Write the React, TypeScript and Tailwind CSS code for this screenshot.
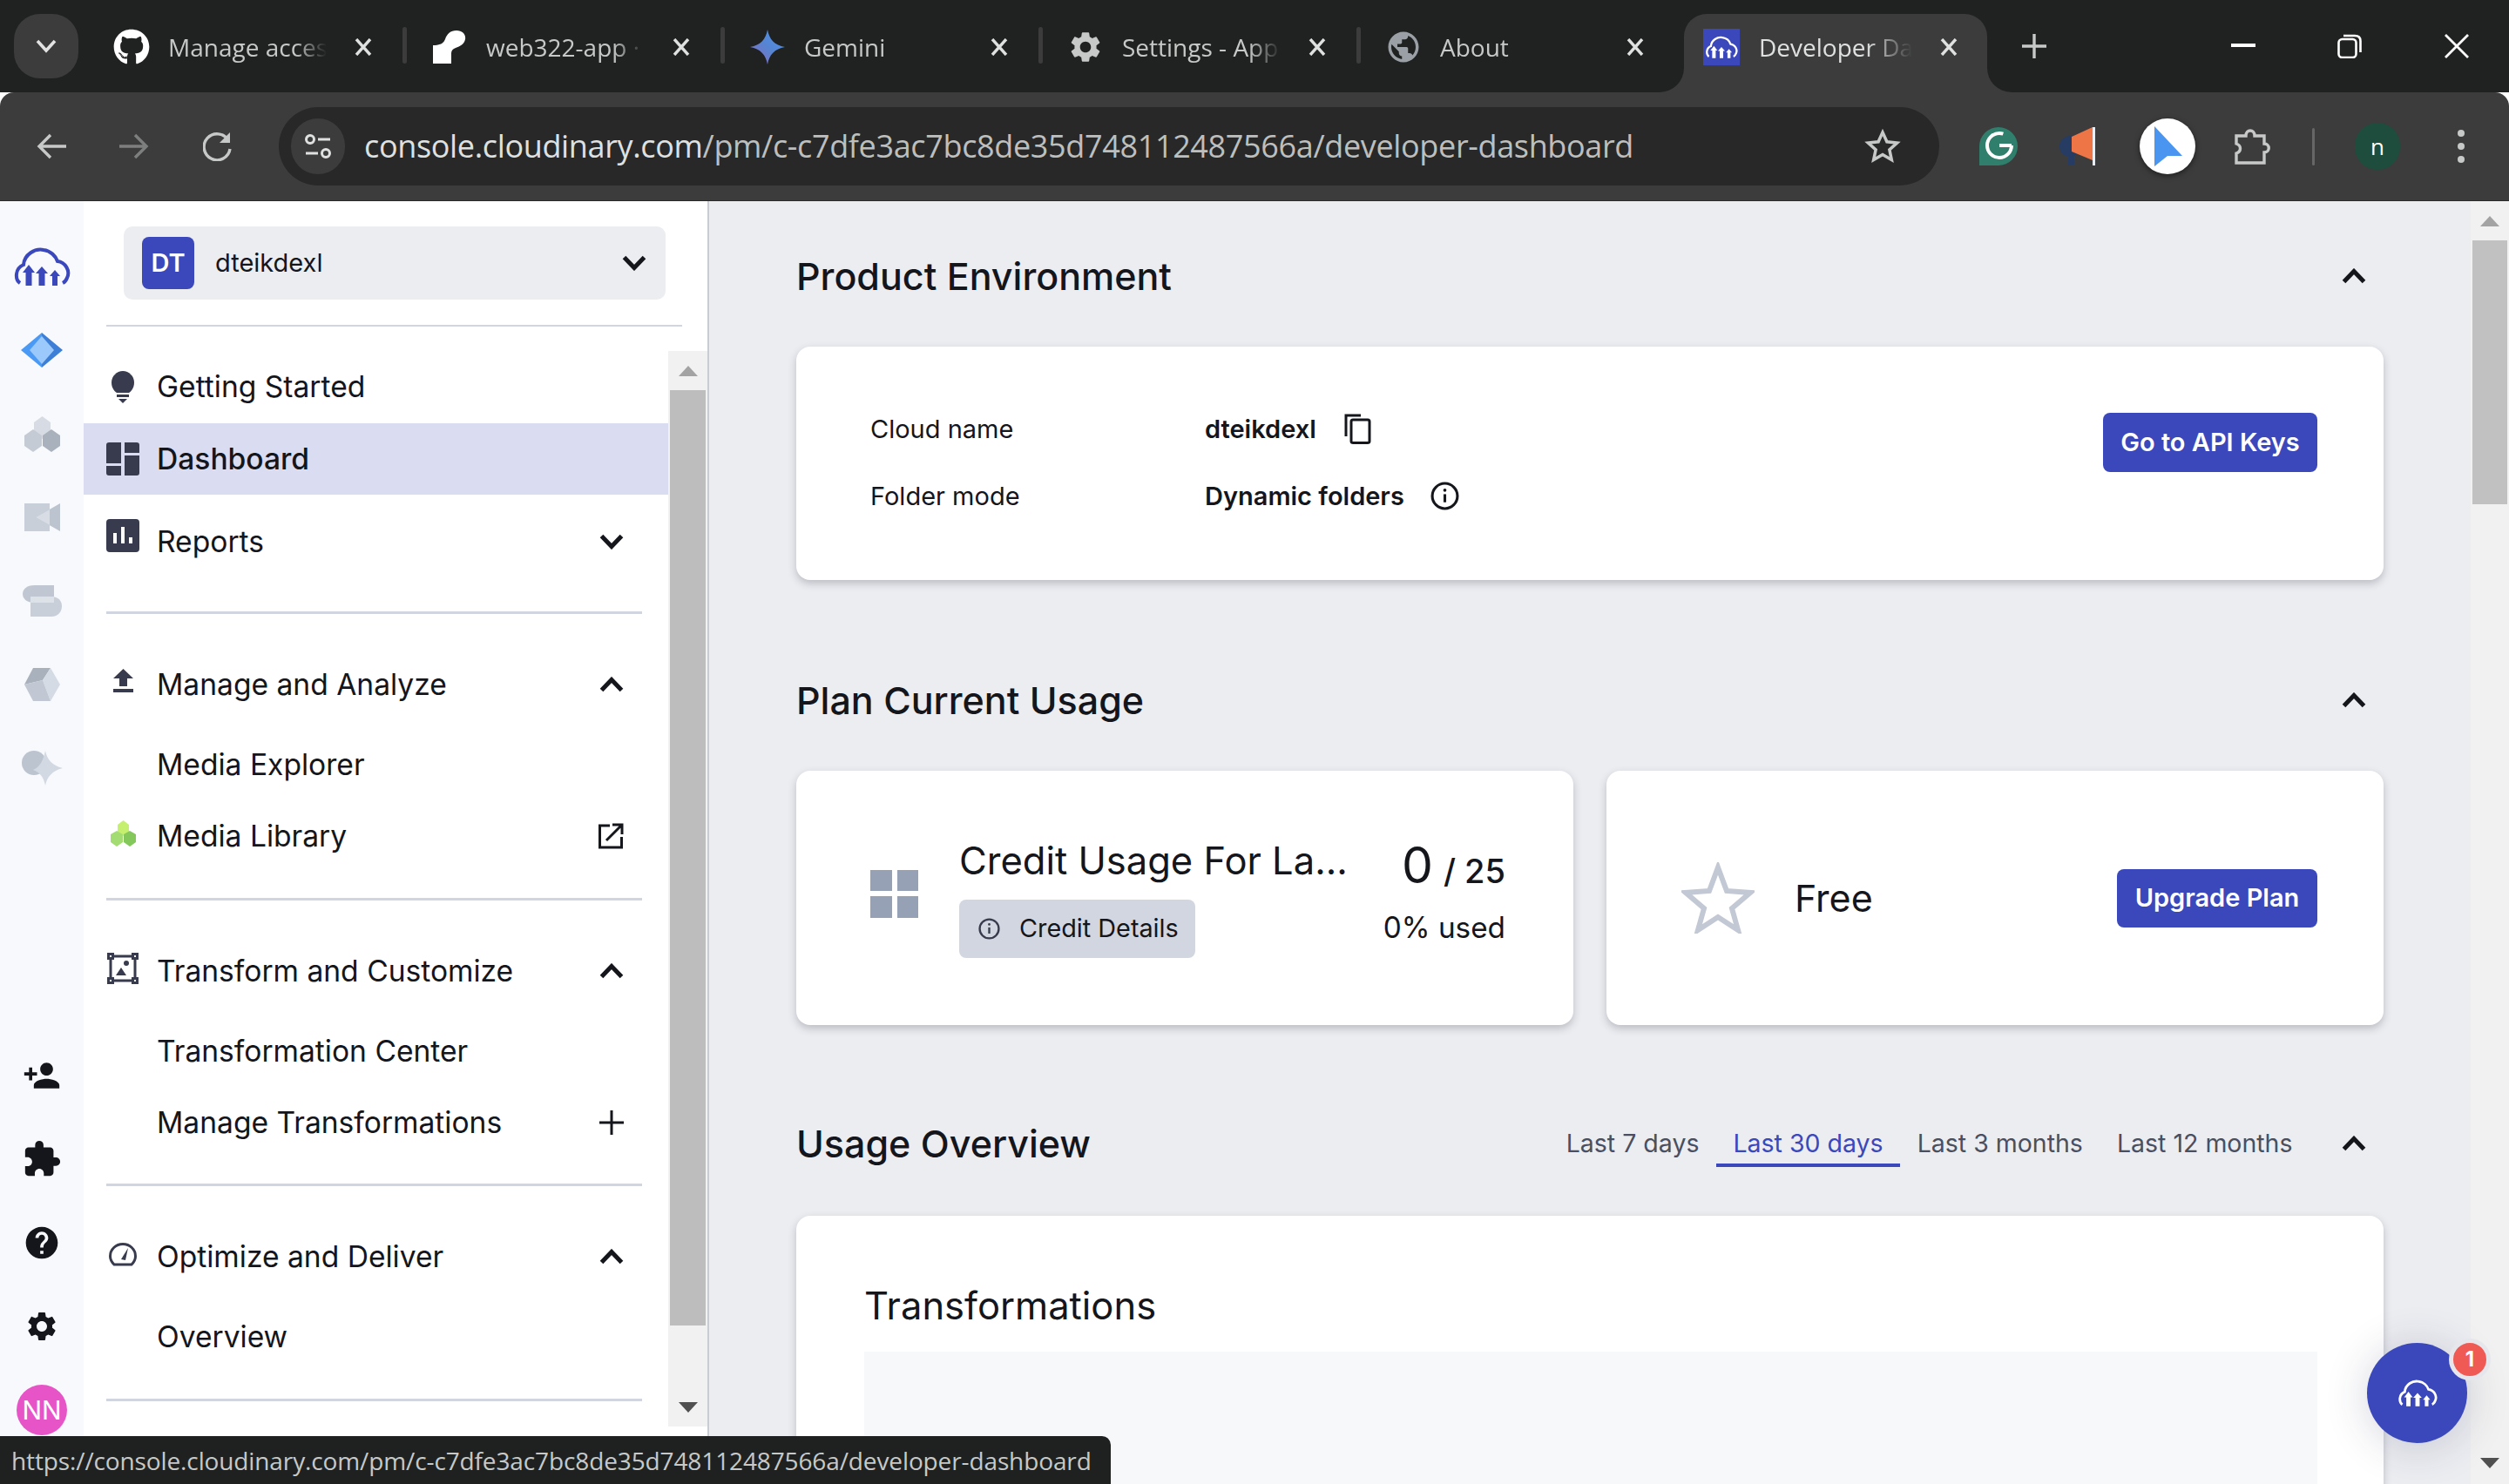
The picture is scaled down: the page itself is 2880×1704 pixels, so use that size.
import type { ReactNode } from 'react';
import { FaGithub } from 'react-icons/fa';
import { MdPublic, MdSettings, MdExtension, MdHelp, MdPersonAdd } from 'react-icons/md';

const INTER = 'font-["Inter",sans-serif]';

function CloudLogo({ className }: { className: string }) {
  return (
    <svg viewBox="0 0 66 44" className={className} fill="currentColor">
      <path d="M8 41C2 37 2 24 12 20 13 8 25 1 35 3c8 1 14 7 16 13 9 1 15 11 11 19-1 3-3 5-5 6" fill="none" stroke="currentColor" strokeWidth="4" />
      <polygon points="18,20 25,29 21.5,29 21.5,44 14.5,44 14.5,29 11,29" />
      <polygon points="33,22 40,30 36.5,30 36.5,44 29.5,44 29.5,30 26,30" />
      <polygon points="48,26 54,33 51,33 51,44 45,44 45,33 42,33" />
    </svg>
  );
}

function Chevron({ up, className = 'w-[28px] h-[18px]' }: { up?: boolean; className?: string }) {
  return (
    <svg viewBox="0 0 28 18" className={className} fill="none" stroke="#14161c" strokeWidth="5">
      <path d={up ? 'M2.5 15.5 14 3.5l11.5 12' : 'M2.5 2.5 14 14.5 25.5 2.5'} />
    </svg>
  );
}

function TabClose() {
  return (
    <svg viewBox="0 0 22 20" className="w-[22px] h-[20px] shrink-0" stroke="#dfe1e0" strokeWidth="3.4" fill="none">
      <path d="M3 1l16 18M19 1 3 19" />
    </svg>
  );
}

function Tab({ icon, title, last }: { icon: ReactNode; title: string; last?: boolean }) {
  return (
    <div className="relative flex items-center w-[365px] h-[90px] pb-[14px] pl-[28px] shrink-0">
      <div className="w-[42px] flex justify-center shrink-0">{icon}</div>
      <div className="ml-[21px] w-[182px] overflow-hidden whitespace-nowrap text-[28px] text-[#c7c9c8] [mask-image:linear-gradient(to_right,black_80%,transparent)]">{title}</div>
      <div className="ml-[31px]">
        <TabClose />
      </div>
      {!last && <div className="absolute right-[0px] top-[15px] w-[5px] h-[42px] rounded-full bg-[#3c3c3c]" />}
    </div>
  );
}

function RailRow({ children }: { children: ReactNode }) {
  return <div className="h-[96px] flex items-center justify-center">{children}</div>;
}

function NavRow({ icon, label, right, active }: { icon?: ReactNode; label: string; right?: ReactNode; active?: boolean }) {
  return (
    <div className={`flex items-center h-[82px] pl-[26px] pr-[51px] ${active ? 'bg-[#dadcf1]' : ''}`}>
      <div className="w-[38px] mr-[20px] flex justify-center shrink-0">{icon}</div>
      <span className={`text-[33.600px] pt-[1px] text-[#14161c] ${active ? 'font-medium' : ''}`}>{label}</span>
      {right && <div className="ml-auto flex items-center">{right}</div>}
    </div>
  );
}

function Divider({ className = '' }: { className?: string }) {
  return <div className={`h-[3px] ml-[26px] mr-[30px] bg-[#d1d5e0] ${className}`} />;
}

function SectionHead({ title, right }: { title: string; right?: ReactNode }) {
  return (
    <div className="flex items-center h-[60px]">
      <h2 className="text-[43px] font-medium text-[#14161c]">{title}</h2>
      <div className="ml-auto flex items-center">
        {right}
        <div className="ml-[37px] mr-[20px]">
          <Chevron up />
        </div>
      </div>
    </div>
  );
}

function PrimaryButton({ label, className }: { label: string; className: string }) {
  return (
    <button className={`bg-[#3a48bc] rounded-[8px] text-white font-semibold text-[29px] flex items-center justify-center ${className}`}>{label}</button>
  );
}

function InfoIcon({ className, color }: { className: string; color: string }) {
  return (
    <svg viewBox="0 0 32 32" className={className} fill="none" stroke={color}>
      <circle cx="16" cy="16" r="14" strokeWidth="3" />
      <path d="M16 14v9" strokeWidth="3" />
      <circle cx="16" cy="9.5" r="1.8" fill={color} stroke="none" />
    </svg>
  );
}

function ScrollArrow({ up, color }: { up?: boolean; color: string }) {
  return (
    <svg viewBox="0 0 22 12" className="w-[22px] h-[12px]" fill={color}>
      <polygon points={up ? '11,0 22,12 0,12' : '0,0 22,0 11,12'} />
    </svg>
  );
}

export default function App() {
  return (
    <div className={`relative w-[2880px] h-[1704px] overflow-hidden flex flex-col bg-white ${INTER}`}>
      {/* tab strip */}
      <div className="h-[106px] bg-[#202221] flex items-end font-['Open_Sans',sans-serif] shrink-0">
        <div className="self-start mt-[16px] ml-[16px] w-[74px] h-[74px] rounded-[30px] bg-[#3c3c3c] flex items-center justify-center shrink-0">
          <svg viewBox="0 0 24 16" className="w-[24px] h-[16px]" fill="none" stroke="#e3e3e3" strokeWidth="3.6">
            <path d="M2 2l10 11L22 2" />
          </svg>
        </div>
        <div className="flex self-start mt-[16px] ml-[12px]">
          <Tab icon={<FaGithub className="w-[42px] h-[42px] text-white" />} title="Manage access" />
          <Tab
            icon={
              <svg viewBox="0 0 38 38" className="w-[38px] h-[38px]" fill="white">
                <path d="M0 17c8 0 12-2 14-7 2-6 6-10 13-10 7 0 11 5 10 10-1 6-6 8-11 10-3 1-5 3-5 6v12H0z" />
              </svg>
            }
            title="web322-app ·"
          />
          <Tab
            icon={
              <svg viewBox="0 0 40 40" className="w-[40px] h-[40px]">
                <defs>
                  <linearGradient id="gem" x1="0" y1="1" x2="1" y2="0">
                    <stop offset="0" stopColor="#9168c0" />
                    <stop offset="0.5" stopColor="#5684d1" />
                    <stop offset="1" stopColor="#4b96f0" />
                  </linearGradient>
                </defs>
                <path d="M20 0c2 11 8 18 20 20-12 2-18 9-20 20-2-11-8-18-20-20C12 18 18 11 20 0z" fill="url(#gem)" />
              </svg>
            }
            title="Gemini"
          />
          <Tab icon={<MdSettings className="w-[44px] h-[44px] text-[#c7c9c8]" />} title="Settings - App" />
          <Tab icon={<MdPublic className="w-[46px] h-[46px] text-[#9aa0a6]" />} title="About" last />
          {/* active tab */}
          <div className="relative flex items-center w-[348px] h-[90px] pb-[14px] pl-[22px] ml-[6px] bg-[#3c3c3c] rounded-t-[26px] shrink-0">
            <div className="absolute -left-[28px] bottom-0 w-[28px] h-[28px] bg-[#3c3c3c]">
              <div className="w-full h-full bg-[#202221] rounded-br-[28px]" />
            </div>
            <div className="absolute -right-[28px] bottom-0 w-[28px] h-[28px] bg-[#3c3c3c]">
              <div className="w-full h-full bg-[#202221] rounded-bl-[28px]" />
            </div>
            <div className="w-[42px] h-[42px] bg-[#3a48bc] flex items-center justify-center text-white shrink-0">
              <CloudLogo className="w-[38px] h-[26px]" />
            </div>
            <div className="ml-[22px] w-[176px] overflow-hidden whitespace-nowrap text-[28px] text-[#dfe1e0] [mask-image:linear-gradient(to_right,black_70%,transparent)]">Developer Dashboard</div>
            <div className="ml-[31px]">
              <TabClose />
            </div>
          </div>
        </div>
        <div className="self-start mt-[39px] ml-[40px] text-[#c7c9c8]">
          <svg viewBox="0 0 28 28" className="w-[28px] h-[28px]" stroke="currentColor" strokeWidth="3.4">
            <path d="M14 0v28M0 14h28" />
          </svg>
        </div>
        <div className="self-start mt-[39px] ml-[212px] flex items-center">
          <div className="w-[28px] h-[4px] bg-white mt-[-3px]" />
          <svg viewBox="0 0 28 28" className="ml-[94px] w-[28px] h-[28px]" fill="none" stroke="white" strokeWidth="2.6">
            <rect x="1.5" y="6" width="20" height="21" rx="4" />
            <path d="M7 2h13c4 0 6.500 2 6.500 6v13" />
          </svg>
          <svg viewBox="0 0 28 28" className="ml-[95px] w-[28px] h-[28px]" fill="none" stroke="white" strokeWidth="2.8">
            <path d="M1 1l26 26M27 1 1 27" />
          </svg>
        </div>
      </div>

      {/* toolbar */}
      <div className="h-[125px] bg-[#3c3c3c] rounded-t-[16px] flex items-center shrink-0 border-b border-[#2c2c2c] font-['Open_Sans',sans-serif]">
        <div className="pl-[42px] flex items-center">
          <svg viewBox="0 0 34 30" className="w-[34px] h-[30px]" fill="none" stroke="#c7c9c8" strokeWidth="3.4">
            <path d="M16 2 3 15l13 13M3 15h31" />
          </svg>
          <svg viewBox="0 0 34 30" className="ml-[61px] w-[34px] h-[30px]" fill="none" stroke="#7d7f7e" strokeWidth="3.4">
            <path d="M18 2l13 13-13 13M31 15H0" />
          </svg>
          <svg viewBox="0 0 34 34" className="ml-[62px] w-[34px] h-[34px]" fill="none" stroke="#c7c9c8" strokeWidth="3.4">
            <path d="M29 10A15 15 0 1 0 31 20" />
            <polygon points="31,1 31,13 19,13" fill="#c7c9c8" stroke="none" />
          </svg>
        </div>
        <div className="ml-[53px] w-[1906px] h-[90px] rounded-full bg-[#282828] flex items-center pl-[14px] pr-[44px]">
          <div className="w-[62px] h-[64px] rounded-full bg-[#3c3c3c] flex items-center justify-center shrink-0">
            <svg viewBox="0 0 32 32" className="w-[32px] h-[32px]" fill="none" stroke="#dfe1e0" strokeWidth="3">
              <circle cx="7" cy="8" r="4.500" />
              <path d="M16 8h14M2 24h14" />
              <circle cx="25" cy="24" r="4.500" />
            </svg>
          </div>
          <div className="ml-[22px] text-[36px] tracking-[-0.35px] text-[#dfe1e0] whitespace-nowrap">
            console.cloudinary.com<span className="text-[#bdbfbe]">/pm/c-c7dfe3ac7bc8de35d748112487566a/developer-dashboard</span>
          </div>
          <svg viewBox="0 0 24 24" className="ml-auto w-[42px] h-[42px] shrink-0" fill="none" stroke="#c7c9c8" strokeWidth="2">
            <path d="M12 2.800l2.800 6.200 6.700.7-5 4.500 1.400 6.600-5.900-3.400-5.900 3.400 1.400-6.600-5-4.500 6.700-.7z" />
          </svg>
        </div>
        <div className="ml-[46px] flex items-center">
          <svg viewBox="0 0 44 44" className="w-[44px] h-[44px]">
            <path d="M22 0a22 22 0 0 1 0 44H0V22A22 22 0 0 1 22 0z" fill="#2f7f6c" />
            <circle cx="23" cy="21" r="14" fill="none" stroke="white" strokeWidth="4" strokeDasharray="70 18" />
            <path d="M23 21h14" stroke="white" strokeWidth="4" />
          </svg>
          <svg viewBox="0 0 42 44" className="ml-[48px] w-[42px] h-[44px]">
            <circle cx="12" cy="22" r="12" fill="#263c63" />
            <rect x="10" y="30" width="7" height="14" fill="#263c63" />
            <polygon points="14,11 38,0 38,38 14,28" fill="#ee7546" />
            <rect x="38" y="0" width="3" height="44" fill="#e8eef4" />
          </svg>
          <div className="ml-[50px] w-[64px] h-[64px] rounded-full bg-white shadow-[0_2px_6px_rgba(0,0,0,0.5)] flex items-center justify-center">
            <svg viewBox="0 0 34 46" className="w-[34px] h-[46px]">
              <path d="M2 0l32 34-17 0-15 12z" fill="#4a95f0" />
            </svg>
          </div>
          <svg viewBox="0 0 42 42" className="ml-[44px] w-[42px] h-[42px]" fill="none" stroke="#c7c9c8" strokeWidth="3.400">
            <path d="M3 9h11c0-8 10-8 10 0h11v9c7 0 7 10 0 10v12H3V29c6-2 6-9 0-11z" />
          </svg>
          <div className="ml-[48px] w-[3px] h-[43px] rounded-full bg-[#666666]" />
          <div className="ml-[46px] w-[52px] h-[54px] rounded-full bg-[#1e4d3e] flex items-center justify-center text-white text-[26px]">n</div>
          <div className="ml-[66px] flex flex-col gap-[7px]">
            <div className="w-[8px] h-[8px] rounded-full bg-[#c7c9c8]" />
            <div className="w-[8px] h-[8px] rounded-full bg-[#c7c9c8]" />
            <div className="w-[8px] h-[8px] rounded-full bg-[#c7c9c8]" />
          </div>
        </div>
      </div>

      {/* page */}
      <div className="flex flex-1 min-h-0">
        {/* rail */}
        <div className="w-[96px] bg-[#f8f9fc] flex flex-col justify-between pt-[27px] pb-[37px] shrink-0">
          <div>
            <RailRow>
              <CloudLogo className="w-[66px] h-[44px] text-[#3a48bc]" />
            </RailRow>
            <RailRow>
              <svg viewBox="0 0 48 40" className="w-[48px] h-[40px]">
                <polygon points="24,0 48,20 24,40" fill="#3d7fd6" transform="translate(0 0)" />
                <polygon points="24,0 0,20 24,40" fill="#4a9af5" />
                <polygon points="24,4 38,20 24,36 10,20" fill="#9cc9fb" />
              </svg>
            </RailRow>
            <RailRow>
              <svg viewBox="0 0 41 41" className="w-[41px] h-[41px]">
                <polygon points="20.5,0 30,7 30,19 20.5,26 11,19 11,7" fill="#d7dce4" />
                <polygon points="10,15 20,22 20,34 10,41 0,34 0,22" fill="#c5cbd5" />
                <polygon points="31,15 41,22 41,34 31,41 21,34 21,22" fill="#a9b1bc" />
              </svg>
            </RailRow>
            <RailRow>
              <svg viewBox="0 0 41 32" className="w-[41px] h-[32px]">
                <rect width="29" height="32" fill="#c9cfd9" />
                <polygon points="13,16 41,0 41,32" fill="#bcc4d0" />
                <polygon points="13,16 29,7 29,25" fill="#d8dde5" />
              </svg>
            </RailRow>
            <RailRow>
              <svg viewBox="0 0 45 36" className="w-[45px] h-[36px]">
                <path d="M14 0h22v20H14C4 20 0 15 0 10S4 0 14 0z" fill="#c0c7d2" />
                <path d="M9 13h24c8 0 12 5 12 11s-4 12-12 12H9z" fill="#c9cfd9" />
                <rect x="9" y="13" width="27" height="7" fill="#dde1e8" />
              </svg>
            </RailRow>
            <RailRow>
              <svg viewBox="0 0 41 38" className="w-[41px] h-[38px]">
                <polygon points="10,0 30,0 21,14 0,19" fill="#a9b1bc" />
                <polygon points="30,0 41,19 30,38 21,14" fill="#d5dbe4" />
                <polygon points="0,19 21,14 30,38 10,38" fill="#c1c8d3" />
              </svg>
            </RailRow>
            <RailRow>
              <svg viewBox="0 0 47 40" className="w-[47px] h-[40px]">
                <circle cx="14" cy="14" r="14" fill="#bcc4d0" />
                <path d="M27 0c2 10 8 17 20 20-12 3-18 10-20 20-2-10-6-15-14-18 8-3 12-12 14-22z" fill="#d3d9e2" />
              </svg>
            </RailRow>
          </div>
          <div className="text-[#14161c]">
            <RailRow>
              <MdPersonAdd className="w-[44px] h-[44px]" />
            </RailRow>
            <RailRow>
              <MdExtension className="w-[46px] h-[46px]" />
            </RailRow>
            <RailRow>
              <MdHelp className="w-[44px] h-[44px]" />
            </RailRow>
            <RailRow>
              <MdSettings className="w-[40px] h-[40px]" />
            </RailRow>
            <RailRow>
              <div className="w-[58px] h-[58px] rounded-full bg-[#e754c8] text-white text-[30px] flex items-center justify-center">NN</div>
            </RailRow>
          </div>
        </div>

        {/* sidebar */}
        <div className="w-[718px] shrink-0 bg-white border-r-2 border-[#c9ccd3] flex flex-col">
          <div className="mt-[29px] ml-[46px] w-[622px] h-[84px] rounded-[10px] bg-[#ecedf1] flex items-center pl-[21px] pr-[22px] shrink-0">
            <div className="w-[60px] h-[60px] rounded-[8px] bg-[#3a48bc] text-white text-[29px] font-semibold flex items-center justify-center">DT</div>
            <span className="ml-[24px] text-[29px] text-[#14161c]">dteikdexl</span>
            <div className="ml-auto">
              <Chevron />
            </div>
          </div>
          <div className="mt-[29px] ml-[26px] w-[661px] h-[2px] bg-[#d1d5e0] shrink-0" />
          <div className="mt-[28px] flex flex-1 min-h-0">
            <div className="w-[671px] shrink-0 overflow-hidden">
              <div className="pb-[1px]">
                <NavRow
                  label="Getting Started"
                  icon={
                    <svg viewBox="0 0 26 37" className="w-[26px] h-[37px]" fill="#373b4d">
                      <path d="M13 0c7 0 13 6 13 13 0 6-3 10-6 12H6c-3-2-6-6-6-12C0 6 6 0 13 0z" />
                      <rect x="6" y="27" width="14" height="3" />
                      <polygon points="8,32 18,32 13,37" />
                    </svg>
                  }
                />
              </div>
              <NavRow
                active
                label="Dashboard"
                icon={
                  <svg viewBox="0 0 38 38" className="w-[38px] h-[38px]" fill="#373b4d">
                    <path d="M3 0h14v24H0V3a3 3 0 0 1 3-3zM21 0h14a3 3 0 0 1 3 3v9H21zM21 15h17v20a3 3 0 0 1-3 3H21zM0 27h17v11H3a3 3 0 0 1-3-3z" />
                  </svg>
                }
              />
              <div className="mt-[13px]">
                <NavRow
                  label="Reports"
                  right={<Chevron />}
                  icon={
                    <svg viewBox="0 0 38 38" className="w-[38px] h-[38px] mt-[-14px]">
                      <rect width="38" height="38" rx="4" fill="#373b4d" />
                      <path d="M10 28V16M19 28V9M28 28v-7" stroke="white" strokeWidth="4" />
                    </svg>
                  }
                />
              </div>
              <Divider className="mt-[39px]" />
              <div className="pt-[40px]">
                <NavRow
                  label="Manage and Analyze"
                  right={<Chevron up />}
                  icon={
                    <svg viewBox="0 0 23 27" className="w-[23px] h-[27px] mt-[-10px]" fill="#373b4d">
                      <polygon points="11.5,0 23,11 16,11 16,20 7,20 7,11 0,11" />
                      <rect y="23" width="23" height="4" />
                    </svg>
                  }
                />
                <div className="h-[10px]" />
                <NavRow label="Media Explorer" />
                <NavRow
                  label="Media Library"
                  icon={
                    <svg viewBox="0 0 29 30" className="w-[29px] h-[30px] mt-[-6px]">
                      <polygon points="14.5,0 21,5 21,13 14.5,18 8,13 8,5" fill="#c5f06f" />
                      <polygon points="7,12 14,16 14,25 7,30 0,25 0,16" fill="#a3dc72" />
                      <polygon points="22,12 29,16 29,25 22,30 15,25 15,16" fill="#84c85c" />
                    </svg>
                  }
                  right={
                    <svg viewBox="0 0 30 30" className="w-[30px] h-[30px] ml-[6px]" fill="none" stroke="#14161c" strokeWidth="3">
                      <path d="M14 3H2.500v25h25V16M10 20 27 3M17 2h11v11" />
                    </svg>
                  }
                />
              </div>
              <Divider className="mt-[30px]" />
              <div className="pt-[40px]">
                <NavRow
                  label="Transform and Customize"
                  right={<Chevron up />}
                  icon={
                    <svg viewBox="0 0 36 36" className="w-[36px] h-[36px] mt-[-6px]" fill="none" stroke="#373b4d" strokeWidth="3">
                      <path d="M6 4h24M6 32h24M4 6v24M32 6v24" />
                      <rect x="1.500" y="1.500" width="5" height="5" />
                      <rect x="29.500" y="1.500" width="5" height="5" />
                      <rect x="1.500" y="29.500" width="5" height="5" />
                      <rect x="29.500" y="29.500" width="5" height="5" />
                      <circle cx="22" cy="12" r="3" fill="#373b4d" stroke="none" />
                      <polygon points="10,26 16,17 22,26" fill="#373b4d" stroke="none" />
                    </svg>
                  }
                />
                <div className="h-[10px]" />
                <NavRow label="Transformation Center" />
                <NavRow
                  label="Manage Transformations"
                  right={
                    <svg viewBox="0 0 28 28" className="w-[28px] h-[28px]" stroke="#14161c" strokeWidth="3">
                      <path d="M14 0v28M0 14h28" />
                    </svg>
                  }
                />
              </div>
              <Divider className="mt-[29px]" />
              <div className="pt-[40px]">
                <NavRow
                  label="Optimize and Deliver"
                  right={<Chevron up />}
                  icon={
                    <svg viewBox="0 0 32 27" className="w-[32px] h-[27px] mt-[-6px]" fill="none" stroke="#373b4d" strokeWidth="3">
                      <path d="M6 25h20C29 22 30.500 19 30.500 15.500 30.500 7.500 24 1.500 16 1.500S1.500 7.500 1.500 15.500C1.500 19 3 22 6 25z" />
                      <path d="M14 19 22 6l-3 14z" fill="#373b4d" stroke="none" />
                    </svg>
                  }
                />
                <div className="h-[10px]" />
                <NavRow label="Overview" />
              </div>
              <Divider className="mt-[30px]" />
            </div>
            <div className="w-[45px] h-[1235px] bg-[#f1f1f1] flex flex-col items-center shrink-0">
              <div className="h-[45px] flex items-center justify-center">
                <ScrollArrow up color="#a3a3a3" />
              </div>
              <div className="w-[41px] h-[1074px] bg-[#bdbdbd]" />
              <div className="mt-auto h-[45px] flex items-center justify-center">
                <ScrollArrow color="#505050" />
              </div>
            </div>
          </div>
        </div>

        {/* main */}
        <div className="flex-1 bg-[#ecedf1] px-[100px] pt-[56px] min-w-0 overflow-hidden">
          <SectionHead title="Product Environment" />
          <div className="mt-[51px] h-[268px] bg-white rounded-[16px] shadow-[0_4px_10px_rgba(40,45,60,0.25)] flex items-center pl-[85px] pr-[76px]">
            <div className="grid grid-cols-[384px_auto] gap-y-[42px] text-[29px] items-center text-[#14161c] mt-[-2px]">
              <span className="h-[35px] leading-[35px]">Cloud name</span>
              <div className="flex items-center h-[35px] font-semibold">
                dteikdexl
                <svg viewBox="0 0 31 35" className="ml-[32px] w-[31px] h-[35px]" fill="none" stroke="#14161c" strokeWidth="3">
                  <path d="M2 26V2h17" />
                  <rect x="8" y="7" width="21" height="26.500" rx="2" />
                </svg>
              </div>
              <span className="h-[35px] leading-[35px]">Folder mode</span>
              <div className="flex items-center h-[35px] font-semibold">
                Dynamic folders
                <InfoIcon className="ml-[30px] w-[33px] h-[33px]" color="#14161c" />
              </div>
            </div>
            <PrimaryButton label="Go to API Keys" className="ml-auto w-[246px] h-[68px] mt-[-48px]" />
          </div>

          <div className="mt-[108px]">
            <SectionHead title="Plan Current Usage" />
          </div>
          <div className="mt-[51px] grid grid-cols-2 gap-[38px]">
            <div className="h-[292px] bg-white rounded-[16px] shadow-[0_4px_10px_rgba(40,45,60,0.25)] flex items-center pl-[85px] pr-[78px]">
              <div className="grid grid-cols-2 gap-[6px] w-[55px] h-[55px] shrink-0 mt-[-10px]">
                <div className="bg-[#96a1b5]" />
                <div className="bg-[#96a1b5]" />
                <div className="bg-[#96a1b5]" />
                <div className="bg-[#96a1b5]" />
              </div>
              <div className="ml-[47px] mt-[-5px]">
                <div className="text-[43.500px] leading-[60px] font-normal text-[#14161c] whitespace-nowrap">Credit Usage For La...</div>
                <div className="mt-[15px] w-[271px] h-[67px] rounded-[8px] bg-[#d2d6e0] flex items-center pl-[22px]">
                  <InfoIcon className="w-[25px] h-[25px]" color="#373b4d" />
                  <span className="ml-[22px] text-[28.800px] text-[#14161c]">Credit Details</span>
                </div>
              </div>
              <div className="ml-auto flex flex-col items-end mt-[-15px]">
                <div className="flex items-baseline text-[#14161c] leading-[70px]">
                  <span className="text-[57px]">0</span>
                  <span className="ml-[12px] text-[38px] font-medium">/ 25</span>
                </div>
                <div className="mt-[7px] text-[33.300px] text-[#14161c] leading-[46px]">0% used</div>
              </div>
            </div>
            <div className="h-[292px] bg-white rounded-[16px] shadow-[0_4px_10px_rgba(40,45,60,0.25)] flex items-center pl-[86px] pr-[76px]">
              <svg viewBox="0 0 84 82" className="w-[84px] h-[82px] shrink-0" fill="none" stroke="#c2c8d4" strokeWidth="6">
                <path d="M42 6l10 27 27 2-21 18 7 25-23-15-23 15 7-25L5 35l27-2z" />
              </svg>
              <span className="ml-[46px] text-[43px] text-[#14161c] font-normal">Free</span>
              <PrimaryButton label="Upgrade Plan" className="ml-auto w-[230px] h-[67px]" />
            </div>
          </div>

          <div className="mt-[106px]">
            <SectionHead
              title="Usage Overview"
              right={
                <div className="flex items-center text-[28.500px] text-[#4a4f5f]">
                  <span className="px-[19.500px]">Last 7 days</span>
                  <span className="relative px-[19.500px] text-[#3a48bc]">
                    Last 30 days
                    <span className="absolute left-0 right-0 -bottom-[6px] h-[4px] bg-[#3a48bc]" />
                  </span>
                  <span className="px-[19.500px]">Last 3 months</span>
                  <span className="px-[19.500px]">Last 12 months</span>
                </div>
              }
            />
          </div>
          <div className="mt-[53px] h-[400px] bg-white rounded-[16px] shadow-[0_4px_10px_rgba(40,45,60,0.25)] pl-[78px] pr-[76px] pt-[73px]">
            <h3 className="text-[43.500px] leading-[60px] font-normal text-[#14161c]">Transformations</h3>
            <div className="mt-[23px] h-[300px] bg-[#f7f8fa]" />
          </div>
        </div>

        {/* page scrollbar */}
        <div className="w-[44px] bg-[#f1f1f1] flex flex-col items-center shrink-0">
          <div className="h-[45px] flex items-center justify-center">
            <ScrollArrow up color="#a3a3a3" />
          </div>
          <div className="w-[40px] h-[303px] bg-[#c1c1c1]" />
          <div className="mt-auto h-[48px] flex items-center justify-center">
            <ScrollArrow color="#505050" />
          </div>
        </div>
      </div>

      {/* floating help button */}
      <div className="absolute left-[2717px] top-[1542px] w-[115px] h-[115px] rounded-full bg-[#3a48bc] shadow-[0_4px_50px_rgba(40,45,90,0.2)] flex items-center justify-center text-white">
        <CloudLogo className="w-[46px] h-[31px]" />
      </div>
      <div className="absolute left-[2811px] top-[1537px] w-[48px] h-[48px] rounded-full bg-[#ef5b54] border-[5px] border-[#e6e7ec] text-white text-[24px] font-bold flex items-center justify-center">1</div>

      {/* link status bubble */}
      <div className="absolute left-0 bottom-0 w-[1275px] h-[55px] bg-[#1f2121] rounded-tr-[10px] pl-[13px] flex items-center text-[28px] tracking-[-0.12px] text-[#c7c9c8] whitespace-nowrap overflow-hidden font-['Open_Sans',sans-serif]">
        https://console.cloudinary.com/pm/c-c7dfe3ac7bc8de35d748112487566a/developer-dashboard
      </div>
    </div>
  );
}
